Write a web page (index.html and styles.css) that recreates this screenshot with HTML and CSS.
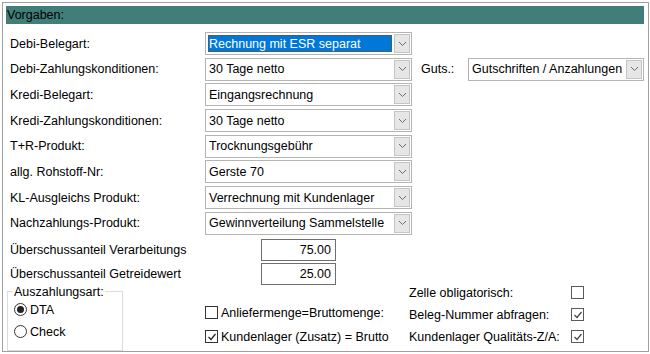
FILE: index.html
```html
<!DOCTYPE html>
<html lang="de">
<head>
  <meta charset="UTF-8" />
  <title>Vorgaben</title>
  <link rel="stylesheet" href="styles.css">
</head>
<body>
  <div class="frame">
    <div class="caption">Vorgaben:</div>

    <div class="rows">
      <div class="row">
        <span class="label">Debi-Belegart:</span>
        <div class="combo focused">
          <span class="value"><span class="sel">Rechnung mit ESR separat</span></span>
          <span class="drop"><svg width="9" height="6" viewBox="0 0 9 6"><polyline points="1,1 4.5,4.5 8,1" fill="none" stroke="#6d6d6d" stroke-width="1"/></svg></span>
        </div>
      </div>

      <div class="row">
        <span class="label">Debi-Zahlungskonditionen:</span>
        <div class="combo">
          <span class="value">30 Tage netto</span>
          <span class="drop"><svg width="9" height="6" viewBox="0 0 9 6"><polyline points="1,1 4.5,4.5 8,1" fill="none" stroke="#6d6d6d" stroke-width="1"/></svg></span>
        </div>
        <span class="guts-label">Guts.:</span>
        <div class="combo guts">
          <span class="value">Gutschriften / Anzahlungen</span>
          <span class="drop"><svg width="9" height="6" viewBox="0 0 9 6"><polyline points="1,1 4.5,4.5 8,1" fill="none" stroke="#6d6d6d" stroke-width="1"/></svg></span>
        </div>
      </div>

      <div class="row">
        <span class="label">Kredi-Belegart:</span>
        <div class="combo">
          <span class="value">Eingangsrechnung</span>
          <span class="drop"><svg width="9" height="6" viewBox="0 0 9 6"><polyline points="1,1 4.5,4.5 8,1" fill="none" stroke="#6d6d6d" stroke-width="1"/></svg></span>
        </div>
      </div>

      <div class="row">
        <span class="label">Kredi-Zahlungskonditionen:</span>
        <div class="combo">
          <span class="value">30 Tage netto</span>
          <span class="drop"><svg width="9" height="6" viewBox="0 0 9 6"><polyline points="1,1 4.5,4.5 8,1" fill="none" stroke="#6d6d6d" stroke-width="1"/></svg></span>
        </div>
      </div>

      <div class="row">
        <span class="label">T+R-Produkt:</span>
        <div class="combo">
          <span class="value">Trocknungsgebühr</span>
          <span class="drop"><svg width="9" height="6" viewBox="0 0 9 6"><polyline points="1,1 4.5,4.5 8,1" fill="none" stroke="#6d6d6d" stroke-width="1"/></svg></span>
        </div>
      </div>

      <div class="row">
        <span class="label">allg. Rohstoff-Nr:</span>
        <div class="combo">
          <span class="value">Gerste 70</span>
          <span class="drop"><svg width="9" height="6" viewBox="0 0 9 6"><polyline points="1,1 4.5,4.5 8,1" fill="none" stroke="#6d6d6d" stroke-width="1"/></svg></span>
        </div>
      </div>

      <div class="row">
        <span class="label">KL-Ausgleichs Produkt:</span>
        <div class="combo">
          <span class="value">Verrechnung mit Kundenlager</span>
          <span class="drop"><svg width="9" height="6" viewBox="0 0 9 6"><polyline points="1,1 4.5,4.5 8,1" fill="none" stroke="#6d6d6d" stroke-width="1"/></svg></span>
        </div>
      </div>

      <div class="row">
        <span class="label">Nachzahlungs-Produkt:</span>
        <div class="combo">
          <span class="value">Gewinnverteilung Sammelstelle</span>
          <span class="drop"><svg width="9" height="6" viewBox="0 0 9 6"><polyline points="1,1 4.5,4.5 8,1" fill="none" stroke="#6d6d6d" stroke-width="1"/></svg></span>
        </div>
      </div>

      <div class="row short first">
        <span class="label wide">Überschussanteil Verarbeitungs</span>
        <div class="num">75.00</div>
      </div>

      <div class="row short second">
        <span class="label wide">Überschussanteil Getreidewert</span>
        <div class="num">25.00</div>
      </div>
    </div>

    <div class="bottom">
      <fieldset class="group">
        <legend>Auszahlungsart:</legend>
        <div class="opt"><span class="radio on"></span>DTA</div>
        <div class="opt"><span class="radio"></span>Check</div>
      </fieldset>

      <div class="checks">
        <div class="check"><span class="box"></span>Anliefermenge=Bruttomenge:</div>
        <div class="check"><span class="box"><svg width="10" height="10" viewBox="0 0 10 10"><polyline points="1.5,5 4,7.5 8.5,2" fill="none" stroke="#222" stroke-width="1.2"/></svg></span>Kundenlager (Zusatz) = Brutto</div>
      </div>

      <div class="flags">
        <div class="flag"><span class="flag-label">Zelle obligatorisch:</span><span class="box light"></span></div>
        <div class="flag"><span class="flag-label">Beleg-Nummer abfragen:</span><span class="box light"><svg width="10" height="10" viewBox="0 0 10 10"><polyline points="1.5,5 4,7.5 8.5,2" fill="none" stroke="#444" stroke-width="1.2"/></svg></span></div>
        <div class="flag"><span class="flag-label">Kundenlager Qualitäts-Z/A:</span><span class="box light"><svg width="10" height="10" viewBox="0 0 10 10"><polyline points="1.5,5 4,7.5 8.5,2" fill="none" stroke="#444" stroke-width="1.2"/></svg></span></div>
      </div>
    </div>
  </div>
</body>
</html>
```

FILE: styles.css
```css
body {
  margin: 0;
  padding: 2px;
  background-color: #ffffff;
  font-family: "Liberation Sans", Arial, sans-serif;
  font-size: 12.5px;
  color: #000000;
}

.frame {
  width: 647px;
  height: 350px;
  border: 1px solid #a0a0a0;
  padding: 3px 4px 0 3px;
  box-sizing: border-box;
  display: flex;
  flex-direction: column;
}

.caption {
  background-color: #417d79;
  height: 18px;
  line-height: 18px;
  padding-left: 1px;
}

.rows {
  display: flex;
  flex-direction: column;
  gap: 2.7px;
  margin-top: 8px;
}

.row {
  display: flex;
  align-items: center;
  height: 23px;
}

.row.short {
  height: 22px;
}

.row.first {
  margin-top: 1.3px;
}

.row.second {
  margin-top: -0.7px;
}

.label {
  width: 199px;
  padding-left: 4px;
  box-sizing: border-box;
}

.label.wide {
  width: 255px;
}

.combo {
  width: 207px;
  height: 23px;
  border: 1px solid #b4b4b4;
  box-sizing: border-box;
  display: flex;
  align-items: stretch;
  padding: 1px;
  background-color: #ffffff;
}

.combo .value {
  flex: 1;
  display: flex;
  align-items: center;
  padding-left: 2px;
  white-space: nowrap;
  overflow: hidden;
}

.combo.focused .value {
  padding: 1px;
}

.sel {
  flex: 1;
  height: 100%;
  display: flex;
  align-items: center;
  padding-left: 1px;
  background-color: #0078d7;
  color: #ffffff;
  outline: 1px dotted #7a4a10;
  outline-offset: -1px;
}

.drop {
  width: 16px;
  background-color: #e6e6e6;
  border: 1px solid #c4c4c4;
  box-sizing: border-box;
  display: flex;
  align-items: center;
  justify-content: center;
  margin-left: 1px;
}

.guts-label {
  margin-left: 9px;
  width: 47px;
}

.combo.guts {
  width: 176px;
}

.num {
  width: 75px;
  height: 22px;
  border: 1px solid #6e6e6e;
  box-sizing: border-box;
  text-align: right;
  padding-right: 4px;
  line-height: 20px;
}

.bottom {
  display: flex;
  margin-top: -3px;
  flex: 1;
}

.group {
  margin: 3px 0 0 1px;
  padding: 0 0 0 6px;
  width: 116px;
  height: 66px;
  box-sizing: border-box;
  border: 1px solid #dcdcdc;
}

.group legend {
  padding: 0 1px;
  margin-left: -1px;
}

.opt {
  display: flex;
  align-items: center;
  height: 22px;
}

.radio {
  width: 11px;
  height: 11px;
  border: 1px solid #333333;
  border-radius: 50%;
  margin-right: 3px;
  display: flex;
  align-items: center;
  justify-content: center;
}

.radio.on::after {
  content: "";
  width: 7px;
  height: 7px;
  border-radius: 50%;
  background-color: #222222;
}

.checks {
  width: 204px;
  margin-left: 82px;
  padding-top: 20px;
  display: flex;
  flex-direction: column;
  gap: 2px;
}

.check {
  display: flex;
  align-items: center;
  height: 22px;
  white-space: nowrap;
}

.box {
  width: 11px;
  height: 11px;
  border: 1px solid #333333;
  background-color: #ffffff;
  margin-right: 3px;
  display: flex;
  align-items: center;
  justify-content: center;
}

.box.light {
  border-color: #5a5a5a;
}

.flags {
  display: flex;
  flex-direction: column;
}

.flag {
  display: flex;
  align-items: center;
  height: 22px;
}

.flag-label {
  width: 162px;
}
```
